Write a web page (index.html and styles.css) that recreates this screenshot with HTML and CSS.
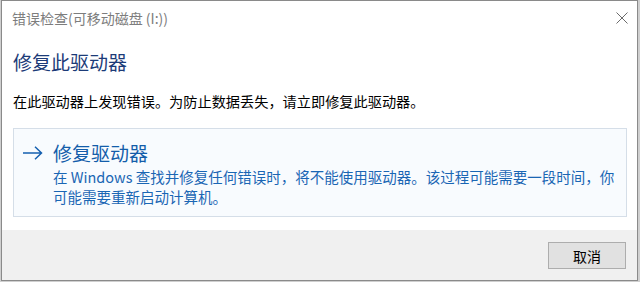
FILE: index.html
```html
<!DOCTYPE html>
<html lang="zh-CN">
<head>
    <meta charset="UTF-8">
    <meta name="viewport" content="width=device-width, initial-scale=1.0">
    <title>错误检查</title>
    <link rel="stylesheet" href="styles.css">
</head>
<body>
    <div class="window">
        <div class="titlebar">
            <span class="title">错误检查(可移动磁盘 (I:))</span>
            <svg class="close" width="12" height="12" viewBox="0 0 12 12">
                <path d="M0.5 0.5 L11.5 11.5 M11.5 0.5 L0.5 11.5" stroke="#6b6b6b" stroke-width="1" fill="none"/>
            </svg>
        </div>

        <div class="content">
            <h1>修复此驱动器</h1>
            <p class="message">在此驱动器上发现错误。为防止数据丢失，请立即修复此驱动器。</p>

            <div class="option">
                <svg class="arrow" width="20" height="14" viewBox="0 0 20 14">
                    <path d="M0 7 H18.5 M12 0.8 L18.5 7 L12 13.2" stroke="#1560b0" stroke-width="1.5" fill="none"/>
                </svg>
                <div class="option-text">
                    <h2>修复驱动器</h2>
                    <p>在 Windows 查找并修复任何错误时，将不能使用驱动器。该过程可能需要一段时间，你可能需要重新启动计算机。</p>
                </div>
            </div>
        </div>

        <div class="footer">
            <button type="button">取消</button>
        </div>
    </div>
</body>
</html>
```

FILE: styles.css
```css
html, body {
    height: 100%;
}

body {
    margin: 0;
    background-color: #cfcfcf;
    font-family: "Segoe UI", "Noto Sans CJK SC", "Noto Sans", sans-serif;
}

.window {
    box-sizing: border-box;
    width: 637px;
    height: 281px;
    margin-left: 1px;
    border: 1px solid #8a8a8a;
    background-color: #fff;
    display: flex;
    flex-direction: column;
}

.titlebar {
    height: 34px;
    display: flex;
    align-items: center;
    justify-content: space-between;
    padding: 0 9px 0 10px;
    flex-shrink: 0;
}

.title {
    font-size: 14px;
    color: #7d7d7d;
}

.content {
    flex: 1;
    padding: 0 10px 0 11px;
}

h1 {
    margin: 14px 0 0;
    font-size: 19px;
    font-weight: normal;
    line-height: 26px;
    color: #1c3b78;
}

.message {
    margin: 16px 0 0;
    font-size: 14.2px;
    line-height: 20px;
    color: #000;
}

.option {
    margin-top: 17px;
    display: flex;
    align-items: flex-start;
    gap: 10px;
    padding: 11px 3px 9px 9px;
    border: 1px solid #d5dee8;
    background-color: #f8fbfe;
}

.arrow {
    margin-top: 6px;
    flex-shrink: 0;
}

.option-text h2 {
    margin: 0 0 1px;
    font-size: 19px;
    font-weight: normal;
    line-height: 26px;
    color: #135daa;
}

.option-text p {
    margin: 0;
    font-size: 14.5px;
    line-height: 20px;
    color: #1a66b4;
}

.footer {
    height: 50px;
    flex-shrink: 0;
    background-color: #f0f0f0;
    display: flex;
    justify-content: flex-end;
    align-items: flex-start;
    padding: 12px 11px 0 0;
    box-sizing: border-box;
}

button {
    width: 78px;
    height: 27px;
    background-color: #e1e1e1;
    border: 1px solid #adadad;
    font-family: inherit;
    font-size: 14px;
    color: #000;
    padding: 0;
}
```
